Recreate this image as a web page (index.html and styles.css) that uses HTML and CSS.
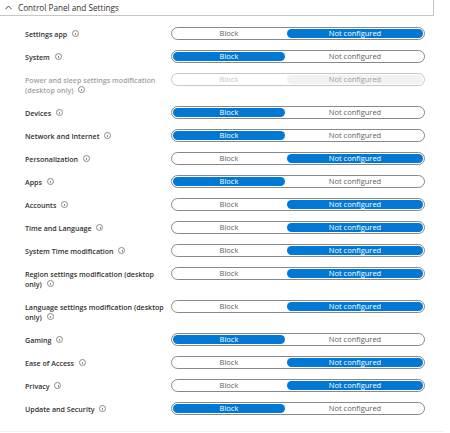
FILE: index.html
```html
<!DOCTYPE html>
<html lang="en">
<head>
    <meta charset="UTF-8">
    <meta name="viewport" content="width=device-width, initial-scale=1.0">
    <title>Control Panel and Settings</title>
    <link rel="stylesheet" href="styles.css">
</head>
<body>

    <!-- section header -->
    <div class="section-head">
        <svg class="chevron" width="7" height="5" viewBox="0 0 7 5"><path d="M0.5 4.2 L3.5 1 L6.5 4.2" fill="none" stroke="#323130" stroke-width="0.9"/></svg>
        <span>Control Panel and Settings</span>
    </div>

    <div class="rows">
        <div class="row">
            <div class="label">Settings app <i class="info"></i></div>
            <div class="toggle"><span class="seg">Block</span><span class="seg on">Not configured</span></div>
        </div>
        <div class="row">
            <div class="label">System <i class="info"></i></div>
            <div class="toggle"><span class="seg on">Block</span><span class="seg">Not configured</span></div>
        </div>
        <div class="row disabled">
            <div class="label">Power and sleep settings modification (desktop only) <i class="info"></i></div>
            <div class="toggle"><span class="seg">Block</span><span class="seg on">Not configured</span></div>
        </div>
        <div class="row">
            <div class="label">Devices <i class="info"></i></div>
            <div class="toggle"><span class="seg on">Block</span><span class="seg">Not configured</span></div>
        </div>
        <div class="row">
            <div class="label">Network and Internet <i class="info"></i></div>
            <div class="toggle"><span class="seg on">Block</span><span class="seg">Not configured</span></div>
        </div>
        <div class="row">
            <div class="label">Personalization <i class="info"></i></div>
            <div class="toggle"><span class="seg">Block</span><span class="seg on">Not configured</span></div>
        </div>
        <div class="row">
            <div class="label">Apps <i class="info"></i></div>
            <div class="toggle"><span class="seg on">Block</span><span class="seg">Not configured</span></div>
        </div>
        <div class="row">
            <div class="label">Accounts <i class="info"></i></div>
            <div class="toggle"><span class="seg">Block</span><span class="seg on">Not configured</span></div>
        </div>
        <div class="row">
            <div class="label">Time and Language <i class="info"></i></div>
            <div class="toggle"><span class="seg">Block</span><span class="seg on">Not configured</span></div>
        </div>
        <div class="row">
            <div class="label">System Time modification <i class="info"></i></div>
            <div class="toggle"><span class="seg">Block</span><span class="seg on">Not configured</span></div>
        </div>
        <div class="row">
            <div class="label">Region settings modification (desktop only) <i class="info"></i></div>
            <div class="toggle"><span class="seg">Block</span><span class="seg on">Not configured</span></div>
        </div>
        <div class="row">
            <div class="label">Language settings modification (desktop only) <i class="info"></i></div>
            <div class="toggle"><span class="seg">Block</span><span class="seg on">Not configured</span></div>
        </div>
        <div class="row">
            <div class="label">Gaming <i class="info"></i></div>
            <div class="toggle"><span class="seg on">Block</span><span class="seg">Not configured</span></div>
        </div>
        <div class="row">
            <div class="label">Ease of Access <i class="info"></i></div>
            <div class="toggle"><span class="seg">Block</span><span class="seg on">Not configured</span></div>
        </div>
        <div class="row">
            <div class="label">Privacy <i class="info"></i></div>
            <div class="toggle"><span class="seg">Block</span><span class="seg on">Not configured</span></div>
        </div>
        <div class="row">
            <div class="label">Update and Security <i class="info"></i></div>
            <div class="toggle"><span class="seg on">Block</span><span class="seg">Not configured</span></div>
        </div>
    </div>

    <div class="foot"></div>

</body>
</html>
```

FILE: styles.css
```css
body {
    margin: 0;
    background-color: white;
    color: #323130;
    font-family: "Open Sans", "Noto Sans", sans-serif;
    font-size: 7.5px;
}

/* header of the collapsible section */
.section-head {
    width: 434px;
    height: 16px;
    border-bottom: 1px solid #c8c6c4;
    border-right: 1px solid #c8c6c4;
    display: flex;
    align-items: center;
    gap: 6px;
    padding-left: 5px;
    box-sizing: border-box;
    font-size: 8.2px;
}

.chevron {
    margin-top: -1px;
}

.rows {
    display: flex;
    flex-direction: column;
    gap: 10px;
    padding: 11px 0 0 25px;
}

.row {
    display: flex;
    align-items: flex-start;
}

.label {
    width: 146px;
    line-height: 10px;
    padding: 1.5px 0;
    font-size: 7.1px;
    font-weight: 600;
    color: #323130;
}

.info {
    display: inline-block;
    width: 5px;
    height: 5px;
    border: 0.8px solid #8a8886;
    border-radius: 50%;
    margin-left: 3px;
    vertical-align: -0.5px;
    position: relative;
}

.info::after {
    content: "";
    position: absolute;
    left: 2.1px;
    top: 1.6px;
    width: 0.8px;
    height: 2.4px;
    background: #8a8886;
}

/* pill toggle */
.toggle {
    width: 254px;
    height: 13px;
    box-sizing: border-box;
    border: 1px solid #8a8886;
    border-radius: 7px;
    padding: 1px;
    display: flex;
    gap: 2px;
}

.seg {
    flex: 1;
    border-radius: 5px;
    text-align: center;
    line-height: 9px;
    color: #605e5c;
}

.seg:first-child {
    flex: 0 0 112px;
}

.seg.on {
    background-color: #0078d4;
    color: white;
}

.disabled .label {
    color: #a19f9d;
}

.disabled .toggle {
    border-color: #c8c6c4;
}

.disabled .seg {
    color: #c8c6c4;
}

.disabled .seg.on {
    background-color: #f3f2f1;
    color: #a19f9d;
}

.foot {
    width: 445px;
    height: 1px;
    background-color: #f3f2f1;
    margin-top: 16px;
}
```
